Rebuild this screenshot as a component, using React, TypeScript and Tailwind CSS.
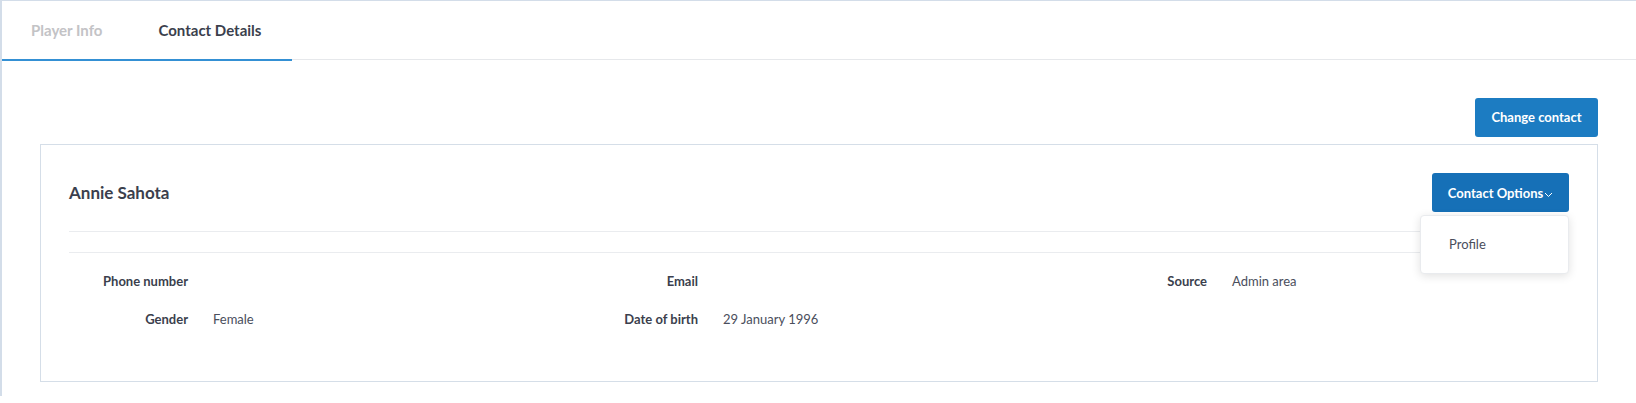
import { useState } from 'react'

function Chevron() {
  return (
    <svg width="9" height="6" viewBox="0 0 9 6" fill="none" className="mt-[8px]">
      <path d="M1 1l3.5 3.5L8 1" stroke="white" strokeWidth="1" />
    </svg>
  )
}

function Field({ label, value }: { label: string; value?: string }) {
  return (
    <div className="flex h-[38px] items-center gap-[25px]">
      <span className="w-[119px] shrink-0 text-right font-bold text-[#3b3f4d]">{label}</span>
      {value && <span className="text-[#4a4e5c]">{value}</span>}
    </div>
  )
}

export default function App() {
  const [tab, setTab] = useState('contact')

  return (
    <div className="h-[396px] border-t border-l-2 border-[#d3dde9] bg-white font-['Lato',sans-serif]">
      <div className="relative flex h-[59px] items-center border-b border-[#e6e8eb] text-[15px] font-bold">
        <button
          onClick={() => setTab('player')}
          className={`h-full pl-[29px] pr-[28px] ${tab === 'player' ? 'text-[#3b3f4d]' : 'text-[#c3c3c6]'}`}
        >
          Player Info
        </button>
        <button
          onClick={() => setTab('contact')}
          className={`h-full px-[28px] ${tab === 'contact' ? 'text-[#3b3f4d]' : 'text-[#c3c3c6]'}`}
        >
          Contact Details
        </button>
        <div className="absolute bottom-[-2px] left-0 h-[2px] w-[290px] bg-[#3490d4]" />
      </div>

      <div className="mt-[38px] flex justify-end pr-[38px]">
        <button className="h-[39px] w-[123px] rounded-[3px] bg-[#1c7cc2] text-[13px] font-bold text-white">
          Change contact
        </button>
      </div>

      <div className="mt-[7px] ml-[38px] mr-[38px] border border-[#d5dee8] px-[28px] pt-[28px] pb-[42px] text-[13px]">
        <div className="flex h-[39px] items-center justify-between">
          <h2 className="text-[17px] font-bold text-[#3b3f4d]">Annie Sahota</h2>
          <div className="relative">
            <button className="flex h-[39px] w-[137px] items-start justify-center gap-[1px] rounded-[3px] bg-[#1670b7] pt-[11px] text-[13px] font-bold text-white">
              Contact Options
              <Chevron />
            </button>
            <div className="absolute top-[42px] right-0 z-10 h-[59px] w-[149px] rounded-[4px] border border-[#e9ebee] bg-white shadow-[0_2px_10px_rgba(0,0,0,0.12)]">
              <div className="pt-[19px] pl-[28px] text-[13px] text-[#4a4e5c]">Profile</div>
            </div>
          </div>
        </div>
        <div className="mt-[19px] h-[21px] border-t border-[#eaecef]" />
        <div className="grid grid-cols-[510px_509px_1fr] border-t border-[#eaecef] pt-[10px]">
          <Field label="Phone number" />
          <Field label="Email" />
          <Field label="Source" value="Admin area" />
          <Field label="Gender" value="Female" />
          <Field label="Date of birth" value="29 January 1996" />
        </div>
      </div>
    </div>
  )
}
